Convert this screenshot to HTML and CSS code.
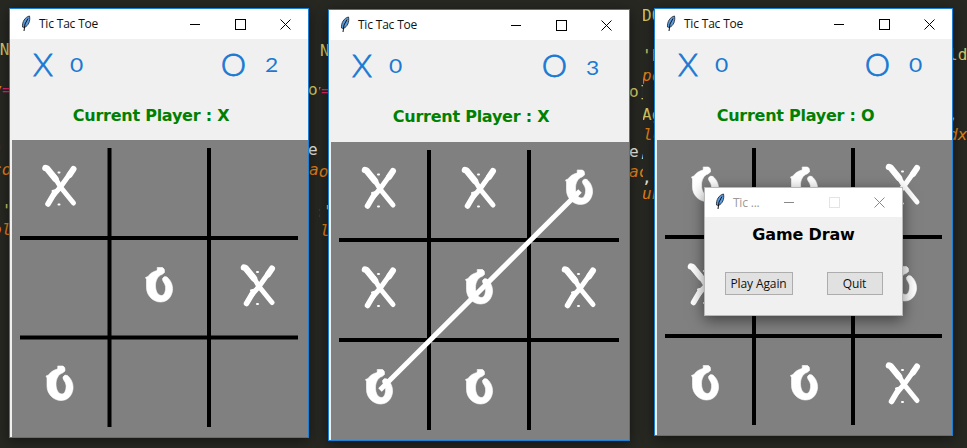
FILE: index.html
```
<!DOCTYPE html>
<html lang="en">
<head>
<meta charset="utf-8">
<title>Tic Tac Toe</title>
<link rel="stylesheet" href="styles.css">
</head>
<body>
<div id="desktop"></div>
<script src="game.js"></script>
</body>
</html>
```
FILE: styles.css
```
* { box-sizing: border-box; }
body { margin: 0; background: #272822; overflow: hidden; font-family: "Open Sans", sans-serif; }
#desktop { position: relative; display: flex; width: 967px; height: 448px; overflow: hidden; background: #272822; }

/* editor panes that show between the windows */
.pane { position: relative; flex: none; height: 448px; overflow: hidden; }
.pane1 { width: 319px; }
.pane2 { width: 324px; }
.pane3 { width: 324px; }
.code { position: absolute; font: 16px/20px "DejaVu Sans Mono", monospace; white-space: pre; }
.khaki { color: #d4c964; }
.orange { color: #e27f18; font-style: italic; }
.pink { color: #e02568; }
.white { color: #e8e8e2; }

.window {
  position: absolute; display: flex; flex-direction: column;
  border: 1px solid #1c7fd4; background: #f0f0f0;
  box-shadow: 0 3px 12px rgba(0, 0, 0, .45);
}
.w1 { left: 9px; top: 8px; width: 300px; height: 430px; }
.w2 { left: 328px; top: 9px; width: 302px; height: 432px; }
.w3 { left: 654px; top: 8px; width: 299px; height: 428px; }

.titlebar { display: flex; align-items: center; height: 30px; flex: none; background: #fff; padding-left: 11px; }
.feather { width: 10px; height: 17px; margin-top: -2px; }
.title { font-size: 12px; line-height: 16px; letter-spacing: -.25px; word-spacing: .3px; margin-left: 8px; flex: 1; color: #111; white-space: nowrap; }
.controls { display: flex; gap: 34px; margin-right: 17px; }
.controls svg { width: 11px; height: 11px; display: block; fill: none; stroke: #000; }

.scores { display: flex; justify-content: space-between; height: 50px; flex: none; padding: 0 31px 0 23px; color: #1a79d2; }
.score { display: flex; font-family: Lato, sans-serif; }
.mark { font-size: 32px; line-height: 49px; font-weight: 300; -webkit-text-stroke: .8px #1a79d2; }
.count { font-size: 19px; line-height: 52px; margin-left: 18px; transform: scaleX(1.2); }
.mark.o { margin-right: 2px; }
.low { position: relative; top: 2px; }
.turn { font: bold 16px/22px "DejaVu Sans", Verdana, sans-serif; letter-spacing: -.25px; color: #008000; text-align: center; padding-right: 16px; margin-top: 16px; flex: 1; white-space: nowrap; }
.board { flex: none; height: 297px; margin-left: 2px; background: #808080; }
.w2 .board { height: 298px; }
.w3 .board { height: 295px; }
.board svg { display: block; width: 100%; height: 100%; }
.grid { stroke: #000; stroke-width: 4; fill: none; }
.piece { stroke: #fff; fill: none; stroke-linecap: round; stroke-linejoin: round; }
.ring { fill: #fff; stroke-width: .6; }
.strike { stroke: #fff; stroke-width: 5; }

.dialog {
  position: absolute; left: 704px; top: 187px; width: 199px; height: 129px;
  display: flex; flex-direction: column; align-items: center;
  background: #f0f0f0; border: 1px solid #b8b8b8; box-shadow: 0 4px 14px rgba(0, 0, 0, .5);
}
.dialog .titlebar { align-self: stretch; height: 29px; padding-left: 10px; }
.dialog .title { color: #999; }
.dialog .controls svg { stroke: #888; }
.dialog .controls .off { stroke: #e4e4e4; }
.message { font: bold 16px/22px "DejaVu Sans", Verdana, sans-serif; letter-spacing: -.15px; margin-top: 7px; }
.actions { display: flex; gap: 34px; margin-top: 26px; }
.actions button { height: 23px; width: 68px; padding: 0; border: 1px solid #adadad; background: #e1e1e1; font: 12px "Open Sans", sans-serif; letter-spacing: -.1px; color: #111; }
.actions button + button { width: 56px; }
```
FILE: game.js
```
const feather = '<svg class="feather" viewBox="0 0 10 17"><path d="M8.500 1C4 2 1 7 1.500 12L3.500 12.500C7.500 10.500 9.500 6 8.500 1Z" fill="#5b9be0" stroke="#26303c" stroke-width=".9"/><path d="M7 3.500L4 9L3 16" fill="none" stroke="#111"/></svg>';
const controls = off => `<div class="controls"><svg viewBox="0 0 11 11"><path d="M0 5.5H10"/></svg><svg class="${off}" viewBox="0 0 11 11"><rect x=".5" y=".5" width="10" height="10"/></svg><svg viewBox="0 0 11 11"><path d="M.5 .5L10.500 10.500M10.500 .5L.5 10.500"/></svg></div>`;

// Pieces are centred on the middle of their cell
const pieces = {
  X: '<path d="M-14-18L-12.500-17.500L-4-7" stroke-width="6.500"/><path d="M-5-9L1 1L14 17" stroke-width="5"/><path d="M14-17L10-11" stroke-width="6"/><path d="M11-13L1 1L-6 9" stroke-width="5"/><path d="M-5 7L-11.500 18" stroke-width="5.500"/><path d="M-7 5L-3 4M-1-13.500H0M-1 18.500H0" stroke-width="2"/>',
  O: '<path class="ring" d="M-1.500-18H3.500Q6-17 5.500-13L3-11C-1-10-3.500-5-3.500 0C-3.500 6-1 10 2.500 10C5.500 10 7 5 6.500 1C6-3 3-4 3.500-7Q5-10 8-8.500C12-5 14 0 13.500 5C12.500 12 8 16.500 1.500 16.500C-6 16.500-12.500 10-12.500 2V-6L-13.500-8L-11-9C-9-12-6-14-2-15Z"/>'
};

const games = [
  { cls: 'w1', x: 0, o: 2, turn: 'X', cells: 'X   OXO  ', w: 296, h: 297, v: [97.5, 197], hl: [98, 197.5], y0: 8, x0: 8, x1: 286, y1: 287, cx: [47.5, 147, 246], cy: [46, 145.5, 244] },
  { cls: 'w2', x: 0, o: 3, turn: 'X', cells: 'XXOXOXOO ', w: 298, h: 298, v: [98, 198], hl: [98, 198], y0: 8, x0: 8, x1: 288, y1: 288, cx: [48, 148, 248], cy: [46, 145.5, 245.5], strike: 'M49 248L249 49' },
  { cls: 'w3', x: 0, o: 0, turn: 'O', cells: 'OOXX OOOX', w: 295, h: 295, v: [97, 196], hl: [97, 196], y0: 8, x0: 8, x1: 285, y1: 285, cx: [48, 147, 246], cy: [45, 144.5, 243.5] }
];

function board(g) {
  let s = `<path class="grid" d="M${g.v[0]} ${g.y0}V${g.y1}M${g.v[1]} ${g.y0}V${g.y1}M${g.x0} ${g.hl[0]}H${g.x1}M${g.x0} ${g.hl[1]}H${g.x1}"/>`;
  [...g.cells].forEach((c, i) => {
    if (pieces[c]) s += `<g class="piece" transform="translate(${g.cx[i % 3]} ${g.cy[Math.floor(i / 3)]})">${pieces[c]}</g>`;
  });
  if (g.strike) s += `<path class="strike" d="${g.strike}"/>`;
  return `<svg viewBox="0 0 ${g.w} ${g.h}">${s}</svg>`;
}

// One list per pane; x and y are relative to the pane: [x, y, class, text]
const panes = [
  [[-10, 40, 'khaki', 'IN'], [-8, 80, 'orange', 'v'], [2, 80, 'pink', '='], [-6, 142, 'orange', "'"],
   [-8, 160, 'orange', 'co'], [-8, 201, 'khaki', ":'"], [-8, 220, 'orange', 'ol'],
   [308, 80, 'khaki', 'o'], [308, 140, 'white', 'e'], [309, 160, 'orange', 'a']],
  [[1, 41, 'khaki', 'N'], [-8, 81, 'orange', 'v'], [2, 81, 'pink', '='], [-6, 142, 'orange', "'"],
   [-10, 162, 'orange', 'go'], [-6, 202, 'khaki', ":'"], [1, 221, 'orange', 'l'],
   [310, 82, 'khaki', 'o]'], [310, 142, 'white', 'e,'], [310, 162, 'orange', 'ac']],
  [[-1, 6, 'khaki', 'DO'], [-1, 46, 'khaki', "'b"], [-1, 66, 'orange', 'po'],
   [-1, 105, 'khaki', 'Ag'], [0, 125, 'orange', 'lo'], [-1, 168, 'white', ','], [-1, 184, 'orange', 'un'],
   [305, 45, 'khaki', 'ld'], [305, 105, 'khaki', ','], [305, 125, 'orange', 'dx']]
];

document.getElementById('desktop').innerHTML =
  panes.map((p, i) => `<div class="pane pane${i + 1}">${p.map(([x, y, c, t]) => `<span class="code ${c}" style="left:${x}px;top:${y}px">${t}</span>`).join('')}</div>`).join('') +
  games.map(g => `<section class="window ${g.cls}">
    <header class="titlebar">${feather}<span class="title">Tic Tac Toe</span>${controls('')}</header>
    <div class="scores"><div class="score"><span class="mark">X</span><span class="count">${g.x}</span></div>
    <div class="score"><span class="mark o">O</span><span class="count ${g.o === 3 ? 'low' : ''}">${g.o}</span></div></div>
    <div class="turn">Current Player : ${g.turn}</div>
    <div class="board">${board(g)}</div></section>`).join('') +
  `<section class="dialog"><header class="titlebar">${feather}<span class="title">Tic ...</span>${controls('off')}</header>
   <div class="message">Game Draw</div><div class="actions"><button>Play Again</button><button>Quit</button></div></section>`;
```
